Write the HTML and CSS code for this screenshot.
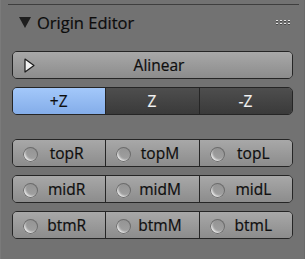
FILE: index.html
```html
<!DOCTYPE html>
<html>
<head>
<meta charset="utf-8">
<link rel="stylesheet" href="styles.css">
</head>
<body>
<div class="panel">
  <div class="topline"></div>
  <div class="header">
    <svg class="disclose" width="12" height="11" viewBox="0 0 12 11"><polygon points="0,0 12,0 6,11" fill="#1e1e1e"/></svg>
    <span class="title">Origin Editor</span>
    <span class="grip">
      <i></i><i></i><i></i><i></i>
      <i></i><i></i><i></i><i></i>
    </span>
  </div>

  <div class="group single">
    <div class="btn regular">
      <span class="ico">
        <svg width="11" height="15" viewBox="0 0 11 15"><polygon points="1,1 10,7.5 1,14" fill="#f0f0f0" stroke="#1c1c1c" stroke-width="1.2" stroke-linejoin="round"/></svg>
      </span>
      <span class="lbl">Alinear</span>
    </div>
  </div>

  <div class="group">
    <div class="btn active"><span class="lbl">+Z</span></div>
    <div class="btn dark"><span class="lbl">Z</span></div>
    <div class="btn dark"><span class="lbl">-Z</span></div>
  </div>

  <div class="grid">
    <div class="group">
      <div class="btn regular"><span class="radio"></span><span class="lbl">topR</span></div>
      <div class="btn regular"><span class="radio"></span><span class="lbl">topM</span></div>
      <div class="btn regular"><span class="radio"></span><span class="lbl">topL</span></div>
    </div>
    <div class="group">
      <div class="btn regular"><span class="radio"></span><span class="lbl">midR</span></div>
      <div class="btn regular"><span class="radio"></span><span class="lbl">midM</span></div>
      <div class="btn regular"><span class="radio"></span><span class="lbl">midL</span></div>
    </div>
    <div class="group">
      <div class="btn regular"><span class="radio"></span><span class="lbl">btmR</span></div>
      <div class="btn regular"><span class="radio"></span><span class="lbl">btmM</span></div>
      <div class="btn regular"><span class="radio"></span><span class="lbl">btmL</span></div>
    </div>
  </div>
</div>
</body>
</html>
```

FILE: styles.css
```css
html, body {
  margin: 0;
  padding: 0;
  background: #727272;
  font-family: "Open Sans", "DejaVu Sans", sans-serif;
}

.panel {
  width: 305px;
  height: 259px;
  box-sizing: border-box;
  padding-top: 4px;
  border-left: 1px solid #7a7a7a;
  border-right: 1px solid #6a6a6a;
}

.topline {
  height: 1px;
  background: #3e3e3e;
  margin: 0 5px 0 7px;
}

.header {
  display: flex;
  align-items: center;
  height: 34px;
  padding-left: 18px;
  padding-right: 14px;
  margin-bottom: 12px;
}

.disclose {
  flex: none;
  margin-top: 1px;
}

.title {
  margin-left: 6px;
  font-size: 16.5px;
  color: #0c0c0c;
  flex: 1;
  -webkit-text-stroke: 0.2px currentColor;
}

.grip {
  display: grid;
  grid-template-columns: repeat(4, 2px);
  grid-auto-rows: 2px;
  column-gap: 2px;
  row-gap: 1px;
  margin-top: 1px;
}

.grip i {
  display: block;
  width: 2px;
  height: 2px;
  background: linear-gradient(#e6e6e6 50%, #4a4a4a 50%);
}

.group {
  display: flex;
  margin: 0 11px 8px 11px;
  height: 28px;
  box-sizing: border-box;
  border: 1px solid #252525;
  border-radius: 5px;
  overflow: hidden;
}

.grid {
  margin-top: 24px;
}

.btn {
  flex: 1 1 0;
  display: flex;
  align-items: center;
  font-size: 15.5px;
  color: #0e0e0e;
  padding: 0 10px 0 9px;
  min-width: 0;
}

.btn + .btn {
  border-left: 1px solid #252525;
}

.regular {
  background: linear-gradient(#a8a8a8, #8c8c8c);
}

.dark {
  background: linear-gradient(#4e4e4e, #3a3a3a);
  color: #f2f2f2;
}

.active {
  background: linear-gradient(#a3c8fa, #84ade9);
  color: #0e0e0e;
}

.ico {
  width: 14px;
  display: flex;
  justify-content: center;
  flex: none;
  padding-top: 1px;
}

.lbl {
  flex: 1;
  text-align: center;
  white-space: nowrap;
  -webkit-text-stroke: 0.2px currentColor;
}

.radio {
  flex: none;
  width: 15px;
  height: 15px;
  box-sizing: border-box;
  border-radius: 50%;
  margin-top: 2px;
  margin-left: 1px;
  background: linear-gradient(#939393, #a2a2a2);
  box-shadow: inset 0 0 0 1px #6c6c6c, inset 2px -2px 2px rgba(255, 255, 255, 0.75);
}
```
